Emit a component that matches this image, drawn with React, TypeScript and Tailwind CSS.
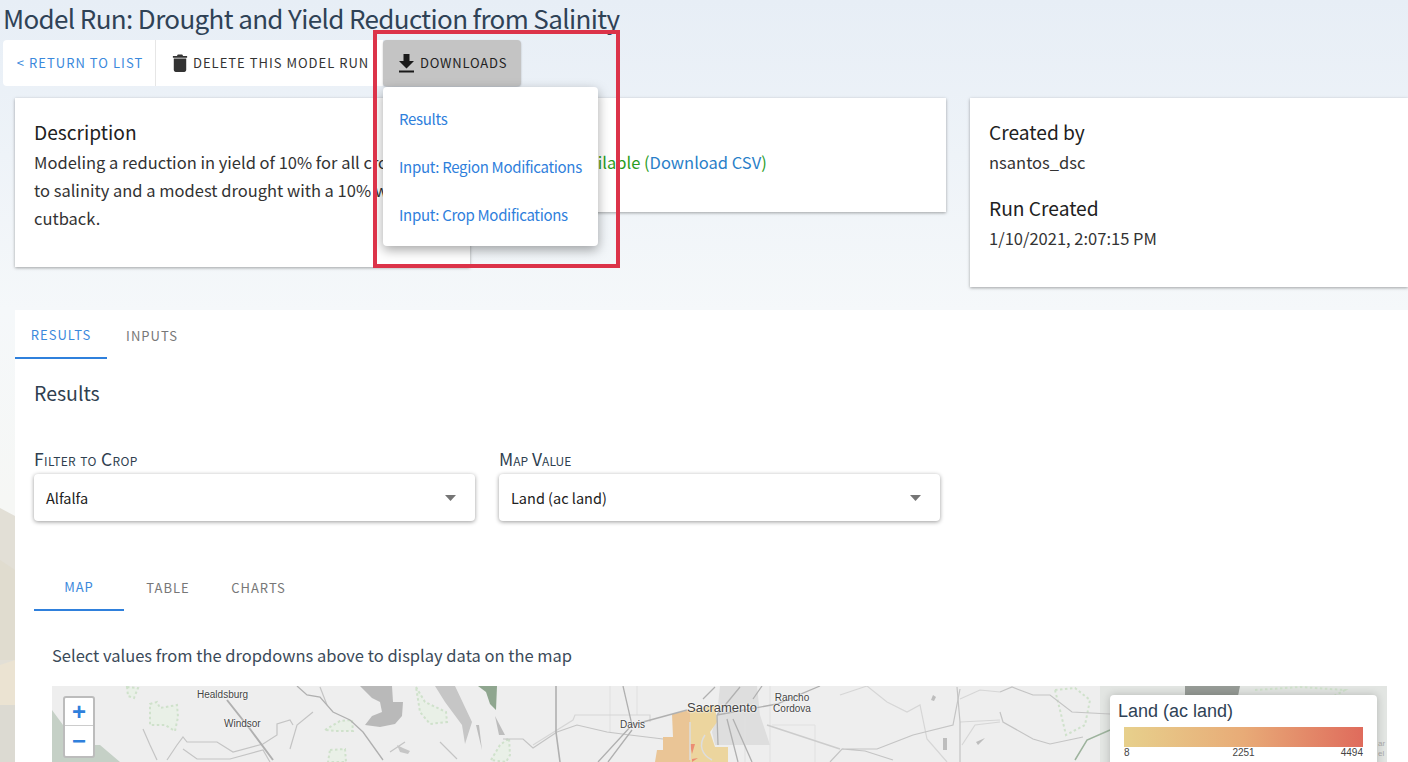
import React from "react";

const SANS = "font-['Noto_Sans_CJK_SC','Noto_Sans',sans-serif]";

function Card({ className, children }: { className: string; children: React.ReactNode }) {
  return <div className={`bg-white shadow-[0_1px_3px_rgba(0,0,0,0.35)] ${className}`}>{children}</div>;
}

function SelectBox({ label, value, labelClass }: { label: string; value: string; labelClass: string }) {
  return (
    <div className="w-[441px]">
      <div className={`h-[26px] text-[17.5px] leading-[22px] text-[#2f3f50] [font-variant:small-caps] ${labelClass}`}>{label}</div>
      <div className="flex h-[47px] items-center justify-between rounded-[4px] bg-white pl-[12px] pr-[19px] text-[#212121] shadow-[0_1px_4px_rgba(0,0,0,0.4)]">
        <span className="text-[14.5px] leading-[20px]">{value}</span>
        <svg width="11" height="6" viewBox="0 0 11 6"><path d="M0 0h11L5.500 6z" fill="#757575" /></svg>
      </div>
    </div>
  );
}

function Hills() {
  return (
    <svg className="absolute left-0 top-[500px]" width="15" height="262" viewBox="0 0 15 262">
      <path d="M0 8L15 16V262H0Z" fill="#e2dfd6" />
      <path d="M0 60L15 70V160H0Z" fill="#e0dccf" />
      <path d="M0 165L15 160V205H0Z" fill="#ebe3d2" />
      <path d="M0 205H15V262H0Z" fill="#dcdad2" />
    </svg>
  );
}

function MapArt() {
  return (
    <svg className="block h-full w-full" viewBox="52 686 1335 76">
      <rect x="52" y="686" width="1335" height="76" fill="#eeeeee" />
      <rect x="1100" y="686" width="287" height="76" fill="#e2e5e2" />
      <path d="M52 710L63 725L83 745L100 745L120 762H52Z" fill="#c5d0c6" />
      <g fill="#e9f0e7" stroke="#cfe1cb" strokeWidth="2" strokeDasharray="2.500 2.500">
        <path d="M150 704L157 702L160 708L177 705L178 717L175 731L165 725L150 725Z" />
        <path d="M127 687L138 688L134 698L128 696Z" />
        <path d="M325 730L340 721L352 720L353 731L335 731Z" />
        <path d="M330 750L345 749L346 762H328Z" />
        <path d="M416 687L425 702L446 712L447 722L430 724L420 712Z" />
        <path d="M491 760L500 745L509 738L510 755L506 762Z" />
        <path d="M1055 690L1075 688L1090 700L1085 725L1066 735L1060 710Z" fill="none" />
        <path d="M1255 690L1300 687L1345 690L1330 698" fill="none" />
      </g>
      <path d="M478 686H497L496 710L490 704L486 692Z" fill="#8fa68f" />
      <path d="M360 686H392L393 702H403L402 716L395 724L380 727L365 725L372 716L382 712L380 702L372 698Z" fill="#b9b9b9" />
      <path d="M435 686H455L472 722L465 744L462 725L445 702Z" fill="#c6c6c6" />
      <path d="M397 745L403 748L410 751L408 754L400 752Z" fill="#c6c6c6" />
      <path d="M476 725L482 750L479 725ZM495 716L505 735L499 735Z M933 695L936 697L934 701L931 700Z M943 738H947L947 750H943Z M985 738L978 745L976 742Z" fill="#bdbdbd" />

      <path d="M720 686H757L760 715L770 745H715L712 732L717 715Z" fill="#dedede" />
      <path d="M690 710L715 705L717 722L710 732L715 747L728 747L728 762H690Z" fill="#ecd59e" />
      <path d="M672 714L690 710V762H655L657 750H663V737H673Z" fill="#eac596" />
      <path d="M690 744L695 744L692 754ZM692 759L698 758L692 762Z" fill="#ec8d72" />
      <path d="M690 722V760M705 735C698 745 702 755 712 760" fill="none" stroke="#dddddd" strokeWidth="1.500" />

      <g fill="none" stroke="#e0e0e0" strokeWidth="1">
        <path d="M610 686V732M637 686V715M745 716V762M770 686V762M772 725L815 725V762" />
      </g>
      <g fill="none" stroke="#d6d6d6" strokeWidth="1.200">
        <path d="M533 745L573 720L575 715H650V722" />
        <path d="M840 695L867 686L887 702L907 712L920 705L927 739L947 762" />
        <path d="M960 699L980 690L1000 692M960 722L1000 720M962 745L975 725L1000 722" />
      </g>
      <g fill="none" stroke="#c4c4c4" strokeWidth="1.200">
        <path d="M143 729L150 745L157 760" />
        <path d="M167 760L177 745L183 737L187 742H217L233 752L263 744L277 735V724L290 720L293 725" />
        <path d="M183 749L197 759H230L263 750L270 762" />
        <path d="M313 712L297 725L290 749" />
        <path d="M320 687L327 705" />
        <path d="M440 742L457 759M390 752L405 742" />
        <path d="M503 739H523L533 748L557 732L577 725L607 732L630 735L663 739" />
        <path d="M842 749H877L913 735L953 725L960 689M830 762L842 749L865 751L893 760" />
        <path d="M957 687L960 722L960 762" />
        <path d="M1000 692L1012 687L1033 695H1050L1072 712L1110 714" />
        <path d="M1000 712L1003 722L1033 739L1050 744L1083 737" />
      </g>
      <g fill="none" stroke="#b0b0b0" strokeWidth="1.300">
        <path d="M227 700L250 729L273 760" strokeWidth="2" />
        <path d="M297 686L307 695L320 697L333 712L350 720L363 732L383 760" />
        <path d="M556 686V732L560 762" strokeWidth="1.600" />
        <path d="M623 686L632 725L598 762M632 730L608 762" />
        <path d="M632 725L687 710" strokeWidth="1.600" />
        <path d="M703 699L715 687M717 715L740 687M753 699L762 686M820 686L777 704L717 715" />
        <path d="M733 719L752 762M727 719L738 762M717 715L718 745" />
      </g>
      <path d="M767 725L840 749" fill="none" stroke="#cccccc" strokeWidth="1.600" />
      <path d="M1075 760L1087 740L1110 730" fill="none" stroke="#9db39d" strokeWidth="1.500" />
      <path d="M1185 686H1240L1238 696H1185Z" fill="#969b96" />
    </svg>
  );
}

const LABEL = "absolute text-[#444] [text-shadow:0_0_2px_#fff,0_0_2px_#fff]";

export default function App() {
  return (
    <div className={`relative h-[762px] w-[1408px] overflow-hidden bg-[linear-gradient(180deg,#e7eef6_0px,#f5f8fa_310px,#f6f7f5_500px)] ${SANS}`}>
      <Hills />
      <h1 className="relative h-[40px] whitespace-nowrap pl-[3px] text-[26px] leading-[35px] font-normal tracking-[-0.63px] text-[#2f4256]">Model Run: Drought and Yield Reduction from Salinity</h1>

      <div className="relative z-10 ml-[3px] flex h-[46px] items-stretch whitespace-nowrap">
        <div className="flex w-[153px] items-center justify-center rounded-l-[4px] border-r border-[#e6e6e6] bg-white pl-[2px] text-[13px] tracking-[1.05px] text-[#3b89dc]">&lt; RETURN TO LIST</div>
        <div className="flex w-[227px] items-center gap-[5px] bg-white pl-[16px] text-[13px] tracking-[1px] text-[#333]">
          <svg width="16" height="20" viewBox="0 0 18 20"><path d="M2 5h14v13a2 2 0 0 1-2 2H4a2 2 0 0 1-2-2zM1 2h4.500l1-1.500h5l1 1.500H17v2H1z" fill="#333" /></svg>
          DELETE THIS MODEL RUN
        </div>
        <div className="flex w-[138px] items-center gap-[5px] rounded-[4px] bg-[#c4c4c4] pl-[15px] text-[13px] tracking-[0.8px] text-[#222] shadow-[0_1px_2px_rgba(0,0,0,0.25)]">
          <svg width="17" height="20" viewBox="0 0 17 20"><path d="M5.500 1h6v7H16l-7.500 7.500L1 8h4.500zM1 17.500h15V19.500H1z" fill="#1a1a1a" /></svg>
          DOWNLOADS
        </div>
      </div>

      <div className="relative mt-[12px] flex items-start pl-[15px] text-[16.5px] leading-[28px] text-[#333]">
        <Card className="h-[169px] w-[455px] px-[19px] pt-[20px]">
          <div className="mb-[2px] text-[19.2px] leading-[28px] text-[#212121]">Description</div>
          <div className="whitespace-nowrap">Modeling a reduction in yield of 10% for all crops due<br />to salinity and a modest drought with a 10% water<br />cutback.</div>
        </Card>
        <Card className="ml-[22px] h-[114px] w-[454px] px-[19px] pt-[20px]">
          <div className="mb-[2px] text-[19.2px] leading-[28px] text-[#212121]">Status</div>
          <div><span className="text-[#2a9d1f]">Results Available (</span><span className="text-[#2a7fc9]">Download CSV</span><span className="text-[#2a9d1f]">)</span></div>
        </Card>
        <Card className="ml-[24px] h-[189px] flex-1 px-[19px] pt-[20px]">
          <div className="mb-[2px] text-[19.2px] leading-[28px] text-[#212121]">Created by</div>
          <div>nsantos_dsc</div>
          <div className="mt-[18px] text-[19.2px] leading-[28px] text-[#212121]">Run Created</div>
          <div className="mt-[2px]">1/10/2021, 2:07:15 PM</div>
        </Card>
      </div>

      <div className="relative ml-[15px] mt-[23px] h-[452px] bg-white">
        <div className="flex h-[49px] text-[13px] tracking-[1px]">
          <div className="flex w-[92px] items-center justify-center border-b-2 border-[#2f80dc] pt-[2px] text-[#3b89dc]">RESULTS</div>
          <div className="flex w-[90px] items-center justify-center pt-[2px] text-[#777]">INPUTS</div>
        </div>
        <div className="px-[19px]">
          <h2 className="mt-[20px] h-[28px] text-[19.5px] leading-[28px] font-normal text-[#2f3f50]">Results</h2>
          <div className="mt-[41px] flex gap-[24px]">
            <SelectBox label="Filter to Crop" value="Alfalfa" labelClass="tracking-[0.35px]" />
            <SelectBox label="Map Value" value="Land (ac land)" labelClass="" />
          </div>
          <div className="mt-[44px] flex h-[46px] text-[13px] tracking-[1px]">
            <div className="flex w-[90px] items-center justify-center border-b-2 border-[#2f80dc] text-[#3b89dc]">MAP</div>
            <div className="flex w-[88px] items-center justify-center text-[#777]">TABLE</div>
            <div className="flex w-[93px] items-center justify-center text-[#777]">CHARTS</div>
          </div>
          <p className="ml-[18px] mt-[32px] h-[24px] whitespace-nowrap text-[16.5px] leading-[24px] text-[#3b4a59]">Select values from the dropdowns above to display data on the map</p>
        </div>
        <div className="relative ml-[37px] mt-[19px] h-[76px] w-[1335px] overflow-hidden">
          <MapArt />
          <div className="font-['Liberation_Sans',sans-serif] text-[10px]">
            <span className={`${LABEL} left-[145px] top-[1px]`}>Healdsburg</span>
            <span className={`${LABEL} left-[172px] top-[30px]`}>Windsor</span>
            <span className={`${LABEL} left-[568px] top-[31px]`}>Davis</span>
            <span className={`${LABEL} left-[635px] top-[12px] text-[13px]`}>Sacramento</span>
            <span className={`${LABEL} left-[720px] top-[6px] w-[40px] text-center leading-[11px]`}>Rancho Cordova</span>
            <span className="absolute left-[1326px] top-[53px] text-[8px] leading-[10px] text-[#aaa]">ar<br />el</span>
          </div>
          <div className="absolute left-[11px] top-[10px] w-[32px] overflow-hidden rounded-[3px] border-2 border-[#bcbcbc] bg-white font-['Liberation_Sans',sans-serif]">
            <div className="flex h-[28px] items-center justify-center border-b border-[#ccc] text-[24px] font-bold leading-none text-[#2f80dc]">+</div>
            <div className="flex h-[30px] items-center justify-center text-[24px] font-bold leading-none text-[#2f80dc]">−</div>
          </div>
          <div className="absolute left-[1058px] top-[9px] h-[80px] w-[267px] rounded-[4px] bg-white px-[8px] pt-[6px] font-['Liberation_Sans',sans-serif] shadow-[0_0_8px_rgba(0,0,0,0.2)]">
            <div className="text-[18px] leading-[20px] text-[#2f4256]">Land (ac land)</div>
            <div className="ml-[6px] mt-[6px] h-[20px] w-[239px] bg-[linear-gradient(90deg,#e7d08c,#e8ab77,#df6b5c)]"></div>
            <div className="ml-[6px] flex w-[239px] text-[10px] leading-[12px] text-[#444]">
              <span className="flex-1">8</span>
              <span>2251</span>
              <span className="flex-1 text-right">4494</span>
            </div>
          </div>
        </div>
      </div>

      <div className="absolute left-[383px] top-[87px] z-20 flex h-[159px] w-[215px] flex-col whitespace-nowrap rounded-[4px] bg-white pl-[16px] text-[15px] leading-[20px] tracking-[-0.32px] text-[#2f80dc] shadow-[0_4px_12px_rgba(0,0,0,0.35)]">
        <div className="mt-[22px]">Results</div>
        <div className="mt-[28px]">Input: Region Modifications</div>
        <div className="mt-[28px]">Input: Crop Modifications</div>
      </div>
      <div className="absolute left-[373px] top-[30px] z-30 h-[238px] w-[247px] border-[4px] border-[#dc3349]"></div>
    </div>
  );
}
